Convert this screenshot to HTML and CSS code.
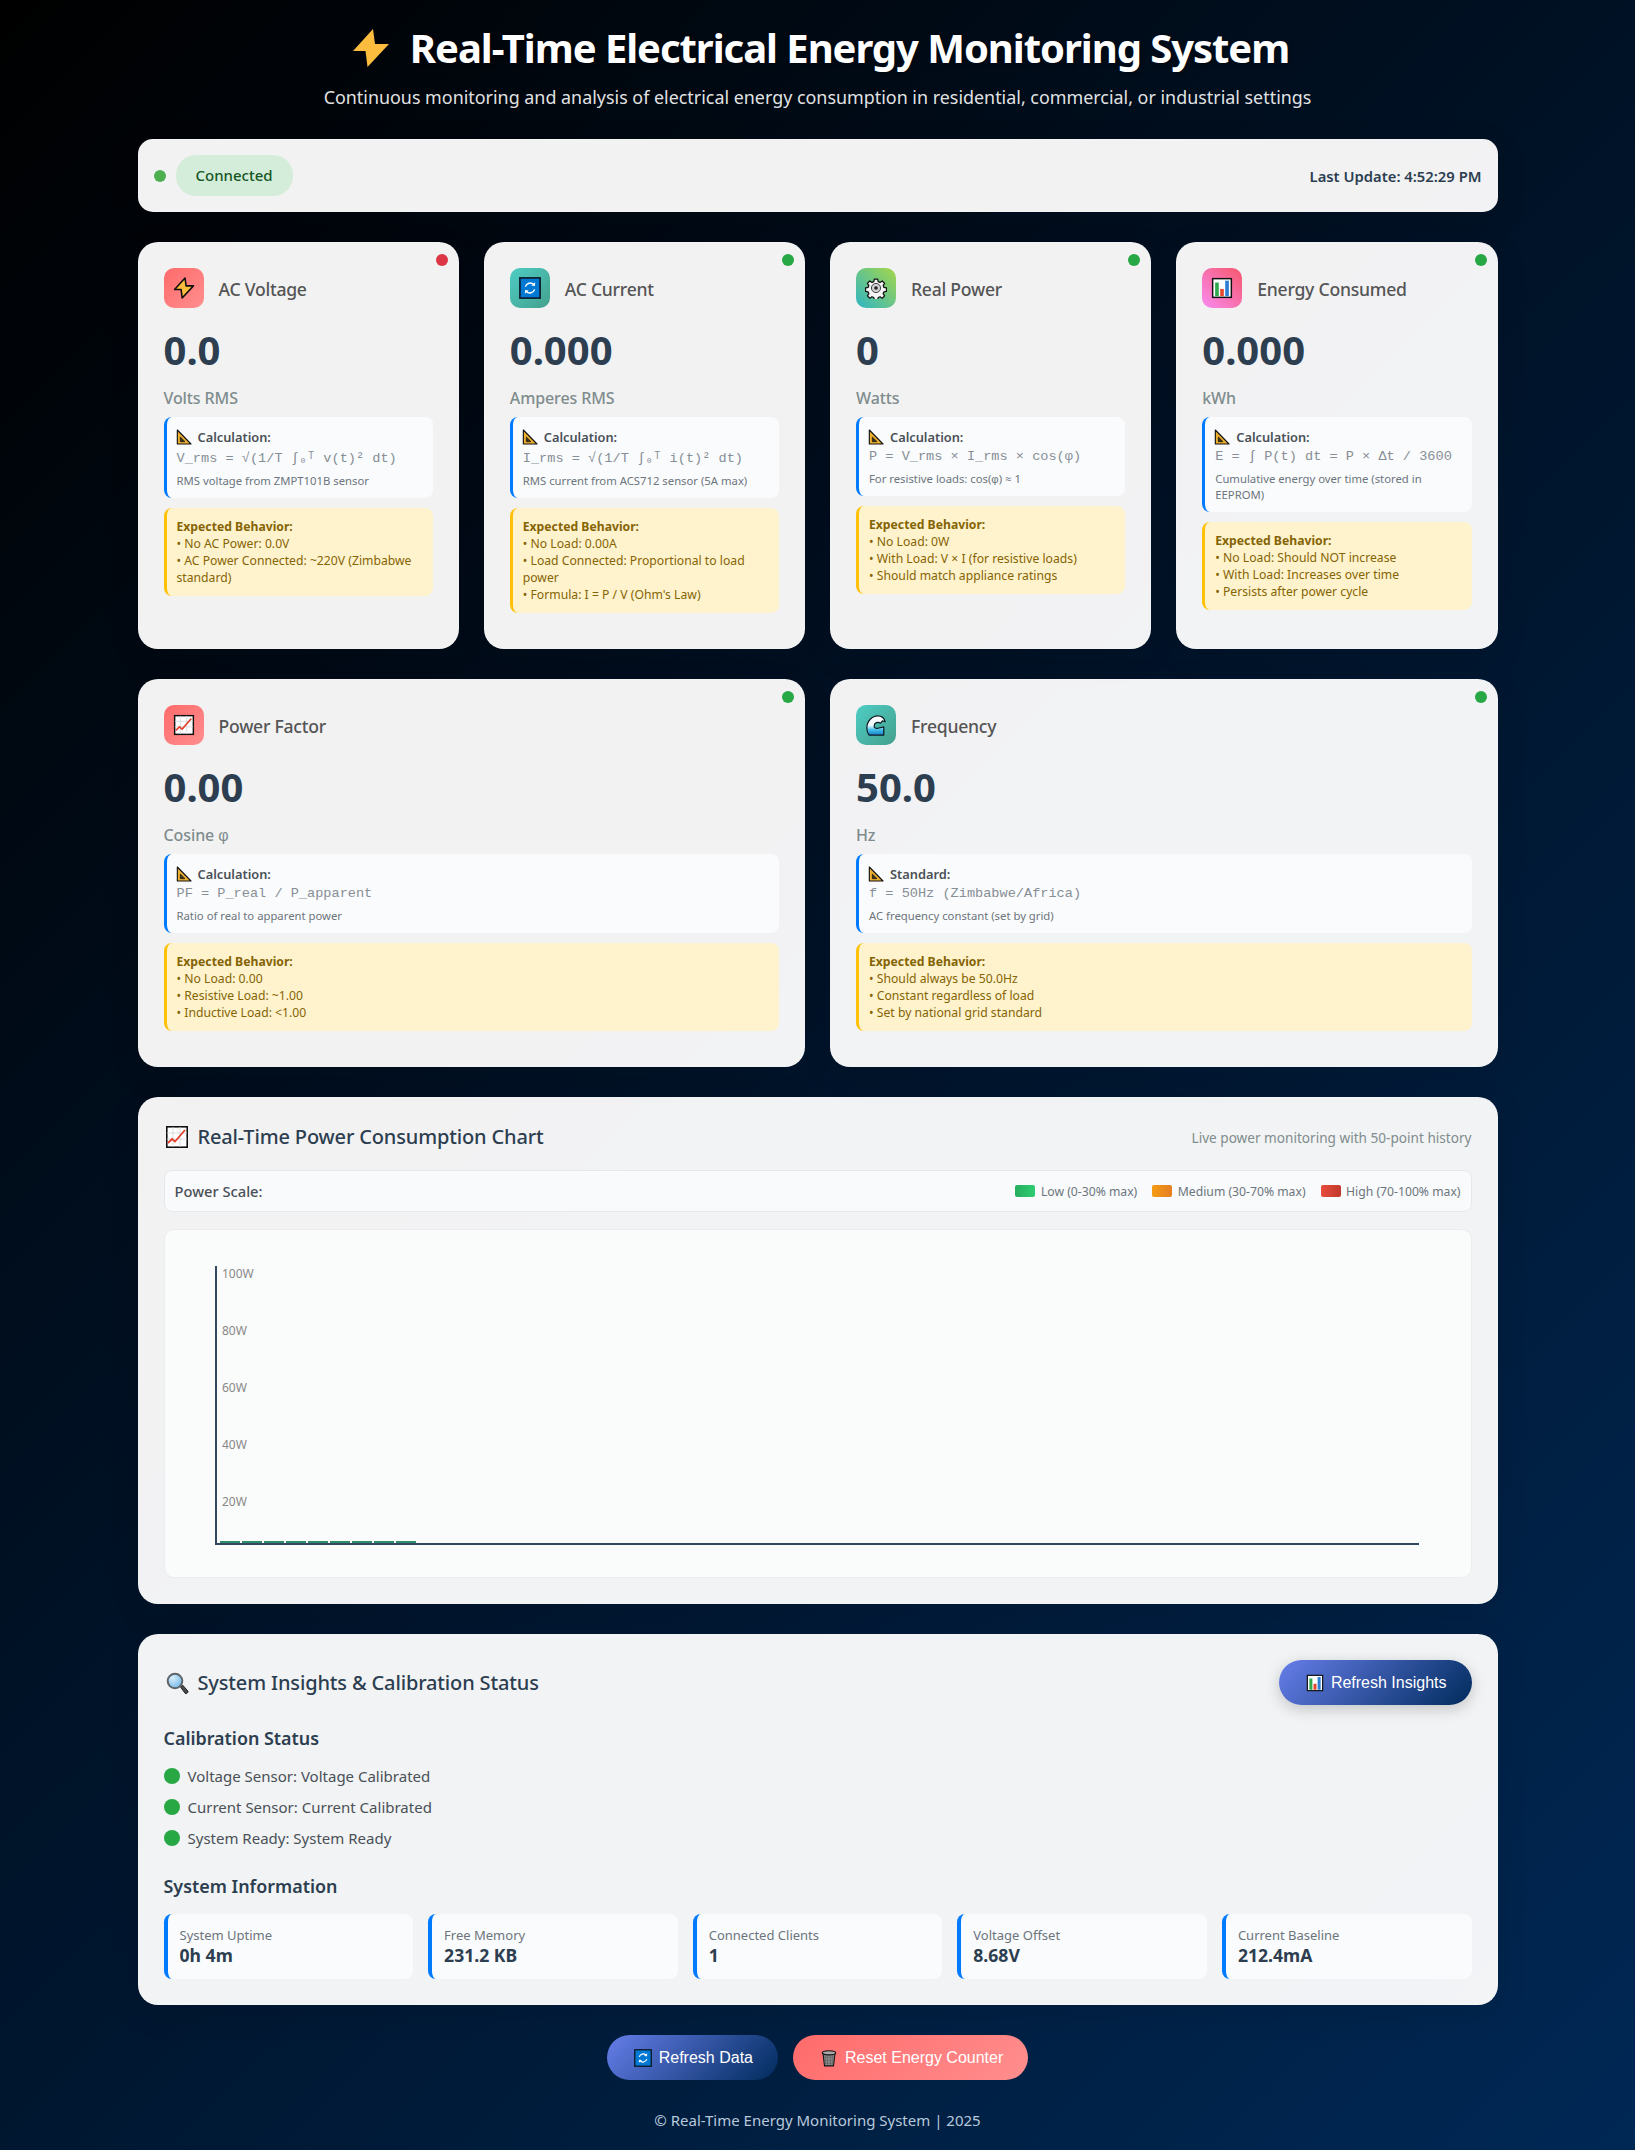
FILE: index.html
```html
<!DOCTYPE html>
<html lang="en">
<head>
<meta charset="utf-8">
<title>Real-Time Electrical Energy Monitoring System</title>
<link rel="stylesheet" href="styles.css">
</head>
<body>
<svg class="defs" width="0" height="0" aria-hidden="true">
  <defs>
    <linearGradient id="waveFill" x1="0" y1="0" x2="0" y2="1"><stop offset="0" stop-color="#fff"/><stop offset=".5" stop-color="#eef9fc"/><stop offset=".72" stop-color="#45c0ea"/><stop offset="1" stop-color="#1480c8"/></linearGradient>
    <radialGradient id="lensFill" cx=".35" cy=".3" r=".8"><stop offset="0" stop-color="#d8effc"/><stop offset="1" stop-color="#6fb4e6"/></radialGradient>
    <symbol id="bolt" viewBox="-2 -2 42 42"><path d="M21 0 1 22h12.500L15.500 38 37 15H23Z" fill="#fcbc3d" stroke="#111" stroke-width="3" stroke-linejoin="round"/></symbol>
    <symbol id="refresh" viewBox="0 0 24 24"><rect x="1" y="1" width="22" height="22" fill="#0078d4" stroke="#0c1a2a" stroke-width="1.800"/><path d="M7 10.500a5.300 5.300 0 0 1 9-2.200M17 13.500a5.300 5.300 0 0 1-9 2.200" fill="none" stroke="#fff" stroke-width="1.600"/><path d="m17.600 5.600-.2 4.200-4-.6ZM6.400 18.400l.2-4.200 4 .6Z" fill="#fff"/></symbol>
    <symbol id="gear" viewBox="0 0 24 24"><path d="M10 1.500h4l.6 3 2.200.9 2.600-1.700 2.800 2.800-1.700 2.600.9 2.200 3 .6v4l-3 .6-.9 2.200 1.700 2.600-2.800 2.800-2.600-1.700-2.200.9-.6 3h-4l-.6-3-2.200-.9-2.600 1.700-2.800-2.800 1.700-2.600-.9-2.200-3-.6v-4l3-.6.9-2.200-1.700-2.600 2.800-2.800 2.600 1.700 2.200-.9.600-3Z" transform="translate(12 12) scale(.92) translate(-12 -12)" fill="#f5f5f5" stroke="#111" stroke-width="1.500" stroke-linejoin="round"/><circle cx="12" cy="12" r="5" fill="#d0d0d0" stroke="#333"/><circle cx="12" cy="12" r="2" fill="#222"/></symbol>
    <symbol id="bars" viewBox="0 0 24 24"><rect x="1.800" y="1.800" width="20.400" height="20.400" fill="#fff" stroke="#111" stroke-width="1.600"/><rect x="4.500" y="6" width="4" height="15" fill="#2fa84f"/><rect x="10" y="13" width="4" height="8" fill="#e2492f"/><rect x="15.500" y="4" width="4" height="17" fill="#2d7fd3"/></symbol>
    <symbol id="trend" viewBox="0 0 24 24"><rect x="1.800" y="1.800" width="20.400" height="20.400" fill="#fff" stroke="#111" stroke-width="1.600"/><path d="M2 8h20M2 14h20M8 2v20M15 2v20" stroke="#cfd4d8" stroke-width=".8"/><path d="m3 18 4-4 3 2.500L20 5" fill="none" stroke="#e2402c" stroke-width="1.800"/></symbol>
    <symbol id="ruler" viewBox="0 0 24 24"><path d="M2 1.500 22.500 22.500H2Z" fill="#eeb02f" stroke="#111" stroke-width="1.700" stroke-linejoin="round"/><path d="M6.500 12 13.500 19H6.500Z" fill="#3a3020" stroke="#111"/></symbol>
    <symbol id="wave" viewBox="0 0 24 24"><path d="M2 15.500C2 7.500 8 2 14 2c4 0 7 2.500 8 6.500l-3-1-2 2.500c-3-2-7-.5-7 3 0 2.200 2 3.300 4 2.500l6.500-1.500V23H4.500C3 21 2 18.500 2 15.500Z" fill="url(#waveFill)" stroke="#0d1a24" stroke-width="1.300" stroke-linejoin="round"/></symbol>
    <symbol id="magnifier" viewBox="0 0 24 24"><path d="m15.500 16 2-2 5.500 6.200c.7.900-1.800 3.100-2.700 2.300Z" fill="#4a4a4a" stroke="#222" stroke-width="1"/><circle cx="10" cy="10" r="7.300" fill="url(#lensFill)" stroke="#5f6468" stroke-width="2"/></symbol>
    <symbol id="trash" viewBox="0 0 24 24"><path d="M4 6h16l-2 16.500H6Z" fill="#8b8b8b" stroke="#111" stroke-width="1.400"/><path d="M7 8v13M10 8v13M14 8v13M17 8v13M5 11h14M5 15h14M6 19h12" stroke="#555" stroke-width=".7"/><ellipse cx="12" cy="5" rx="9" ry="2.800" fill="#a8a8a8" stroke="#111" stroke-width="1.400"/></symbol>
  </defs>
</svg>

<div class="page">
  <header class="hero">
    <h1 class="hero-title"><svg class="hero-bolt" viewBox="0 0 38 38"><path d="M21 0 1 22h12.500L15.500 38 37 15H23Z" fill="#fcbc3d"/></svg><span>Real-Time Electrical Energy Monitoring System</span></h1>
    <p class="hero-sub">Continuous monitoring and analysis of electrical energy consumption in residential, commercial, or industrial settings</p>
  </header>

  <section class="status-bar panel">
    <div class="status-left"><span class="conn-dot"></span><span class="conn-pill">Connected</span></div>
    <div class="last-update">Last Update: 4:52:29 PM</div>
  </section>

  <section class="grid-four">
    <article class="card panel">
      <span class="led led-bad"></span>
      <div class="card-head"><span class="tile-icon grad-red"><svg class="emoji-22"><use href="#bolt"/></svg></span><h3 class="card-title">AC Voltage</h3></div>
      <div class="value">0.0</div>
      <div class="unit">Volts RMS</div>
      <div class="calc">
        <div class="calc-label"><svg class="emoji-16"><use href="#ruler"/></svg>Calculation:</div>
        <div class="formula formula-tall">V_rms = √(1/T ∫₀ᵀ v(t)² dt)</div>
        <div class="calc-note">RMS voltage from ZMPT101B sensor</div>
      </div>
      <div class="expect"><strong>Expected Behavior:</strong><br>• No AC Power: 0.0V<br>• AC Power Connected: ~220V (Zimbabwe<br>standard)</div>
    </article>

    <article class="card panel">
      <span class="led"></span>
      <div class="card-head"><span class="tile-icon grad-teal"><svg class="emoji-22"><use href="#refresh"/></svg></span><h3 class="card-title">AC Current</h3></div>
      <div class="value">0.000</div>
      <div class="unit">Amperes RMS</div>
      <div class="calc">
        <div class="calc-label"><svg class="emoji-16"><use href="#ruler"/></svg>Calculation:</div>
        <div class="formula formula-tall">I_rms = √(1/T ∫₀ᵀ i(t)² dt)</div>
        <div class="calc-note">RMS current from ACS712 sensor (5A max)</div>
      </div>
      <div class="expect"><strong>Expected Behavior:</strong><br>• No Load: 0.00A<br>• Load Connected: Proportional to load<br>power<br>• Formula: I = P / V (Ohm's Law)</div>
    </article>

    <article class="card panel">
      <span class="led"></span>
      <div class="card-head"><span class="tile-icon grad-lime"><svg class="emoji-22"><use href="#gear"/></svg></span><h3 class="card-title">Real Power</h3></div>
      <div class="value">0</div>
      <div class="unit">Watts</div>
      <div class="calc">
        <div class="calc-label"><svg class="emoji-16"><use href="#ruler"/></svg>Calculation:</div>
        <div class="formula">P = V_rms × I_rms × cos(φ)</div>
        <div class="calc-note">For resistive loads: cos(<span class="greek">φ</span>) ≈ 1</div>
      </div>
      <div class="expect"><strong>Expected Behavior:</strong><br>• No Load: 0W<br>• With Load: V × I (for resistive loads)<br>• Should match appliance ratings</div>
    </article>

    <article class="card panel">
      <span class="led"></span>
      <div class="card-head"><span class="tile-icon grad-pink"><svg class="emoji-22"><use href="#bars"/></svg></span><h3 class="card-title">Energy Consumed</h3></div>
      <div class="value">0.000</div>
      <div class="unit">kWh</div>
      <div class="calc">
        <div class="calc-label"><svg class="emoji-16"><use href="#ruler"/></svg>Calculation:</div>
        <div class="formula">E = ∫ P(t) dt = P × Δt / 3600</div>
        <div class="calc-note">Cumulative energy over time (stored in<br>EEPROM)</div>
      </div>
      <div class="expect"><strong>Expected Behavior:</strong><br>• No Load: Should NOT increase<br>• With Load: Increases over time<br>• Persists after power cycle</div>
    </article>
  </section>

  <section class="grid-two">
    <article class="card panel">
      <span class="led"></span>
      <div class="card-head"><span class="tile-icon grad-red"><svg class="emoji-22"><use href="#trend"/></svg></span><h3 class="card-title">Power Factor</h3></div>
      <div class="value">0.00</div>
      <div class="unit">Cosine <span class="greek">φ</span></div>
      <div class="calc">
        <div class="calc-label"><svg class="emoji-16"><use href="#ruler"/></svg>Calculation:</div>
        <div class="formula">PF = P_real / P_apparent</div>
        <div class="calc-note">Ratio of real to apparent power</div>
      </div>
      <div class="expect"><strong>Expected Behavior:</strong><br>• No Load: 0.00<br>• Resistive Load: ~1.00<br>• Inductive Load: &lt;1.00</div>
    </article>

    <article class="card panel">
      <span class="led"></span>
      <div class="card-head"><span class="tile-icon grad-teal"><svg class="emoji-22"><use href="#wave"/></svg></span><h3 class="card-title">Frequency</h3></div>
      <div class="value">50.0</div>
      <div class="unit">Hz</div>
      <div class="calc">
        <div class="calc-label"><svg class="emoji-16"><use href="#ruler"/></svg>Standard:</div>
        <div class="formula">f = 50Hz (Zimbabwe/Africa)</div>
        <div class="calc-note">AC frequency constant (set by grid)</div>
      </div>
      <div class="expect"><strong>Expected Behavior:</strong><br>• Should always be 50.0Hz<br>• Constant regardless of load<br>• Set by national grid standard</div>
    </article>
  </section>

  <section class="chart-card panel">
    <div class="chart-head">
      <h2 class="section-title"><svg class="emoji-24"><use href="#trend"/></svg><span>Real-Time Power Consumption Chart</span></h2>
      <div class="chart-sub">Live power monitoring with 50-point history</div>
    </div>
    <div class="scale-bar">
      <div class="scale-label">Power Scale:</div>
      <div class="legend">
        <div class="legend-item"><span class="swatch swatch-low"></span>Low (0-30% max)</div>
        <div class="legend-item"><span class="swatch swatch-mid"></span>Medium (30-70% max)</div>
        <div class="legend-item"><span class="swatch swatch-high"></span>High (70-100% max)</div>
      </div>
    </div>
    <div class="chart-box">
      <svg class="chart-svg" viewBox="0 0 1305 347" width="1305" height="347">
        <path class="chart-axis" d="M51 36V314H1254"/>
        <g class="chart-bars">
          <rect x="55" y="311" width="20" height="2"/><rect x="77" y="311" width="20" height="2"/><rect x="99" y="311" width="20" height="2"/><rect x="121" y="311" width="20" height="2"/><rect x="143" y="311" width="20" height="2"/><rect x="165" y="311" width="20" height="2"/><rect x="187" y="311" width="20" height="2"/><rect x="209" y="311" width="20" height="2"/><rect x="231" y="311" width="20" height="2"/>
        </g>
        <g class="chart-ticks">
          <text x="57" y="48">100W</text>
          <text x="57" y="105">80W</text>
          <text x="57" y="162">60W</text>
          <text x="57" y="219">40W</text>
          <text x="57" y="276">20W</text>
        </g>
      </svg>
    </div>
  </section>

  <section class="insights panel">
    <div class="insights-head">
      <h2 class="section-title"><svg class="emoji-24"><use href="#magnifier"/></svg><span>System Insights &amp; Calibration Status</span></h2>
      <button class="btn btn-blue btn-shadow" type="button"><svg class="emoji-18"><use href="#bars"/></svg>Refresh Insights</button>
    </div>
    <h3 class="sub-title">Calibration Status</h3>
    <ul class="checks">
      <li class="check"><span class="check-dot"></span>Voltage Sensor: Voltage Calibrated</li>
      <li class="check"><span class="check-dot"></span>Current Sensor: Current Calibrated</li>
      <li class="check"><span class="check-dot"></span>System Ready: System Ready</li>
    </ul>
    <h3 class="sub-title sub-title-gap">System Information</h3>
    <div class="info-grid">
      <div class="info"><div class="info-label">System Uptime</div><div class="info-value">0h 4m</div></div>
      <div class="info"><div class="info-label">Free Memory</div><div class="info-value">231.2 KB</div></div>
      <div class="info"><div class="info-label">Connected Clients</div><div class="info-value">1</div></div>
      <div class="info"><div class="info-label">Voltage Offset</div><div class="info-value">8.68V</div></div>
      <div class="info"><div class="info-label">Current Baseline</div><div class="info-value">212.4mA</div></div>
    </div>
  </section>

  <div class="actions">
    <button class="btn btn-blue" type="button"><svg class="emoji-18"><use href="#refresh"/></svg>Refresh Data</button>
    <button class="btn btn-red" type="button"><svg class="emoji-18"><use href="#trash"/></svg>Reset Energy Counter</button>
  </div>

  <footer class="footer">© Real-Time Energy Monitoring System | 2025</footer>
</div>
</body>
</html>
```
FILE: styles.css
```css
* { box-sizing: border-box; }
html, body { margin: 0; padding: 0; }
body {
  min-height: 2150px;
  font-family: "Noto Sans", "Open Sans", sans-serif;
  background: linear-gradient(135deg, #000 0%, #002855 100%);
  color: #2c3e50;
}
.defs { position: absolute; }
.page { width: 1360px; margin: 0 auto; padding-top: 20px; }
.greek { font-family: "Liberation Sans", sans-serif; }

.hero { text-align: center; margin-bottom: 30px; color: #fff; }
.hero-title {
  margin: 0; height: 56px; line-height: 56px; font-size: 40px; font-weight: 700;
  letter-spacing: -1.05px;
  padding-left: 6px;
  display: flex; justify-content: center; align-items: center; gap: 20px;
  text-shadow: 2px 2px 4px rgba(0,0,0,.3);
}
.hero-bolt { width: 38px; height: 38px; flex: none; }
.hero-sub { margin: 9px 0 0; height: 24px; line-height: 24px; font-size: 17.9px; color: rgba(255,255,255,.9); }

.panel {
  background: rgba(255,255,255,.95);
  border: 1px solid rgba(255,255,255,.2);
  border-radius: 20px;
  box-shadow: 0 8px 32px rgba(0,0,0,.1);
}

.status-bar {
  height: 73px; margin-bottom: 30px; padding: 0 15px;
  border-radius: 15px;
  display: flex; align-items: center; justify-content: space-between;
}
.status-left { display: flex; align-items: center; gap: 10px; }
.conn-dot { width: 12px; height: 12px; border-radius: 50%; background: #4caf50; }
.conn-pill {
  height: 41px; line-height: 41px; padding: 0 20px; border-radius: 20px;
  background: #d4edda; color: #155724; font-size: 15px; font-weight: 500;
}
.last-update { font-size: 14.8px; font-weight: 600; color: #2c3e50; }

.grid-four { display: grid; grid-template-columns: repeat(4, 1fr); gap: 25px; margin-bottom: 30px; }
.grid-two { display: grid; grid-template-columns: repeat(2, 1fr); gap: 25px; margin-bottom: 30px; }

.card { position: relative; padding: 25px; }
.led { position: absolute; top: 11px; right: 10px; width: 12px; height: 12px; border-radius: 50%; background: #28a745; }
.led-bad { background: #dc3545; }
.card-head { display: flex; align-items: center; gap: 15px; margin-bottom: 20px; }
.tile-icon { width: 40px; height: 40px; border-radius: 10px; display: flex; align-items: center; justify-content: center; flex: none; }
.grad-red { background: linear-gradient(135deg, #ff6b6b, #ff8e8e); }
.grad-teal { background: linear-gradient(135deg, #4ecdc4, #44a08d); }
.grad-lime { background: linear-gradient(45deg, #2fb5c4, #a5d64a); }
.grad-pink { background: linear-gradient(45deg, #fa8bf0, #f5576c); }
.card-title { margin: 0; padding-top: 2px; font-size: 17.6px; line-height: 24px; font-weight: 500; letter-spacing: -.25px; color: #555; }
.value { height: 48px; line-height: 44px; margin-bottom: 11px; font-size: 40px; font-weight: 700; color: #2c3e50; }
.unit { height: 22px; line-height: 22px; margin-bottom: 8px; font-size: 16px; font-weight: 500; letter-spacing: -.1px; color: #7f8c8d; }

.calc {
  background: #fafbfc; border-left: 3px solid #007bff; border-radius: 8px;
  padding: 10px 10px 9px; margin-bottom: 10px;
}
.calc-label { height: 20px; line-height: 20px; font-size: 12.8px; font-weight: 600; color: #495057; display: flex; align-items: center; gap: 6px; }
.calc-label svg { margin-left: -1px; }
.formula { height: 19px; line-height: 19px; font-family: "Liberation Mono", monospace; font-size: 13.6px; color: #868e96; white-space: nowrap; }
.formula-tall { height: 21px; padding-top: 2px; }
.calc-note { margin-top: 5px; font-size: 11.3px; line-height: 16px; color: #6c757d; }

.expect {
  background: #fff3cd; border-left: 3px solid #ffc107; border-radius: 8px;
  padding: 10px; margin-bottom: 10px;
  font-size: 12.2px; line-height: 17px; color: #856404;
}
.expect strong { font-weight: 700; }

.chart-card { padding: 25px; margin-bottom: 30px; }
.chart-head { display: flex; align-items: center; justify-content: space-between; height: 28px; margin-bottom: 19px; }
.section-title { margin: 0; display: flex; align-items: center; gap: 9px; font-size: 20px; line-height: 28px; font-weight: 500; letter-spacing: -.15px; color: #2c3e50; }
.section-title svg { margin-left: 1px; }
.chart-sub { font-size: 13.6px; color: #7f8c8d; }
.scale-bar {
  height: 42px; margin-bottom: 17px; padding: 0 10px;
  background: #f9fafb; border: 1px solid #e6e9ec; border-radius: 8px;
  display: flex; align-items: center; justify-content: space-between;
}
.scale-label { font-size: 14.7px; font-weight: 500; color: #495057; }
.legend { display: flex; gap: 15px; }
.legend-item { display: flex; align-items: center; gap: 5.5px; font-size: 12.2px; color: #6c757d; }
.swatch { width: 20px; height: 12px; border-radius: 2px; }
.swatch-low { background: linear-gradient(90deg, #27ae60, #2ecc71); }
.swatch-mid { background: linear-gradient(90deg, #f39c12, #e67e22); }
.swatch-high { background: linear-gradient(90deg, #e74c3c, #c0392b); }
.chart-box { height: 349px; background: #fafbfb; border: 1px solid #ebedef; border-radius: 10px; }
.chart-svg { display: block; }
.chart-bars rect { fill: #2e8b6e; }
.chart-axis { fill: none; stroke: #34495e; stroke-width: 2; }
.chart-ticks text { font-family: "Noto Sans", sans-serif; font-size: 12px; fill: #888; }

.insights { padding: 25px; margin-bottom: 30px; }
.insights-head { height: 45px; display: flex; align-items: center; justify-content: space-between; margin-bottom: 21px; }
.sub-title { margin: 0 0 15px; height: 24px; line-height: 24px; font-size: 17.9px; font-weight: 600; color: #2c3e50; }
.sub-title-gap { margin: 26px 0 16px; }
.checks { list-style: none; margin: 0; padding: 0; display: flex; flex-direction: column; gap: 10px; }
.check { display: flex; align-items: center; gap: 8px; height: 21px; font-size: 15px; color: #495057; }
.check-dot { width: 16px; height: 16px; border-radius: 50%; background: #28a745; }
.info-grid { display: grid; grid-template-columns: repeat(5, 1fr); gap: 15px; }
.info { height: 65px; padding: 12px 12px 10px; background: #fafbfc; border-left: 4px solid #007bff; border-radius: 8px; }
.info-label { height: 18px; line-height: 18px; font-size: 13px; color: #6c757d; }
.info-value { height: 24px; line-height: 23px; font-size: 17.6px; font-weight: 700; color: #2c3e50; }

.btn {
  height: 45px; padding: 0 25px 0 27px; border: 0; border-radius: 25px;
  font-family: "Liberation Sans", Arial, sans-serif; font-size: 16px; color: #fff;
  display: inline-flex; align-items: center; gap: 7px;
}
.btn-blue { background: linear-gradient(135deg, #667eea, #002b5c); }
.btn-red { background: linear-gradient(135deg, #ff6b6b, #ff8e8e); }
.btn-shadow { box-shadow: 0 4px 15px rgba(0,0,0,.2); }
.actions { display: flex; justify-content: center; gap: 15px; margin-bottom: 30px; }
.footer { text-align: center; height: 20px; line-height: 20px; font-size: 15px; color: #b8c9dc; }

.emoji-16 { width: 16px; height: 16px; flex: none; }
.emoji-18 { width: 18px; height: 18px; flex: none; }
.emoji-22 { width: 22px; height: 22px; flex: none; }
.emoji-24 { width: 24px; height: 24px; flex: none; }
```
